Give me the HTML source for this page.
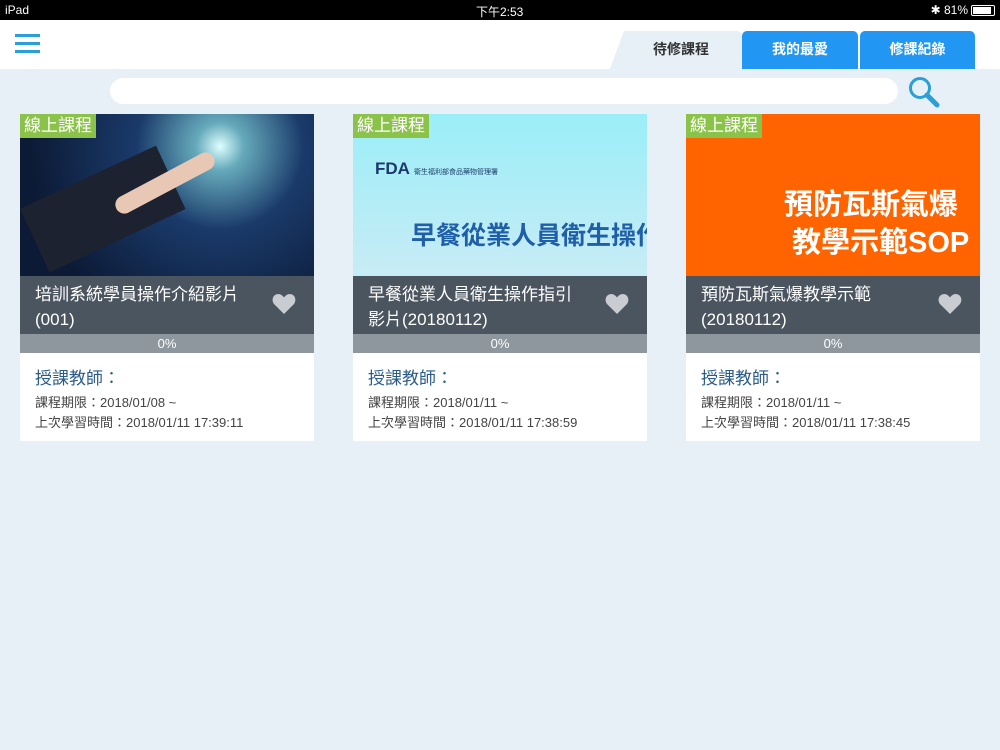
<!DOCTYPE html>
<html><head><meta charset="utf-8"><style>
*{margin:0;padding:0;box-sizing:border-box}
body{width:1000px;height:750px;background:#e6f0f6;font-family:"Liberation Sans","Noto Sans CJK TC",sans-serif;position:relative;overflow:hidden}
.status{position:absolute;top:0;left:0;width:1000px;height:20px;background:#000;color:#fff;font-size:12px}
.hdr{position:absolute;top:20px;left:0;width:1000px;height:49px;background:#fff}
.tab{position:absolute;top:31px;height:38px;color:#fff;font-weight:bold;font-size:14px;line-height:36px;text-align:center;background:#2196f3;border-radius:5px 5px 0 0}
.search{position:absolute;left:110px;top:78px;width:788px;height:26px;background:#fff;border-radius:13px}
.card{position:absolute;top:114px;width:294px;height:327px;background:#fff}
.img{position:absolute;top:0;left:0;width:294px;height:162px;overflow:hidden}
.tag{position:absolute;top:0;left:0;background:#8bc34a;color:#fff;font-size:17px;height:24px;line-height:24px;padding:0 4px}
.tband{position:absolute;top:162px;left:0;width:294px;height:58px;background:#4a5560;color:#fff;font-size:17px;line-height:25px;padding:6px 50px 0 15px}
.heart{position:absolute;right:17px;top:179px}
.prog{position:absolute;top:220px;left:0;width:294px;height:19px;background:#8e979e;color:#fff;font-size:13px;text-align:center;line-height:19px}
.t1{position:absolute;top:250px;left:15px;color:#2a5b8a;font-size:17px}
.t2{position:absolute;top:279px;left:15px;color:#444;font-size:13px;line-height:20px}
</style></head><body>
<div class="status"><span style="position:absolute;left:5px;top:3px">iPad</span><span style="position:absolute;left:476px;top:3px">下午2:53</span><span style="position:absolute;right:32px;top:3px">✱ 81%</span><div style="position:absolute;right:5px;top:5px;width:24px;height:11px;border:1px solid #fff;border-radius:2px"><div style="width:18px;height:7px;margin:1px;background:#fff"></div></div></div>
<div class="hdr">
<div style="position:absolute;left:15px;top:14px;width:25px;height:3px;background:#2a9fd8;box-shadow:0 8px 0 #2a9fd8,0 16px 0 #2a9fd8"></div>
</div>
<div style="position:absolute;left:610px;top:31px;width:132px;height:38px;background:#e6f0f6;clip-path:polygon(14px 0,100% 0,100% 100%,0 100%);border-radius:5px 5px 0 0;color:#333;font-weight:bold;font-size:14px;line-height:36px;text-align:center;padding-left:10px">待修課程</div>
<div class="tab" style="left:742px;width:116px">我的最愛</div>
<div class="tab" style="left:860px;width:115px">修課紀錄</div>
<div class="search"></div>
<svg style="position:absolute;left:907px;top:75px" width="34" height="34"><circle cx="13" cy="13" r="9.5" fill="none" stroke="#2a9fd8" stroke-width="3"/><line x1="20" y1="20" x2="30" y2="30" stroke="#2a9fd8" stroke-width="5" stroke-linecap="round"/></svg>

<div class="card" style="left:20px"><div class="img" style="background:radial-gradient(circle at 68% 20%,#dff 0,#6ab 10%,#1a3a6a 35%,#0c1a35 80%)"><div style="position:absolute;left:0;top:95px;width:150px;height:70px;background:#1c2230;transform:rotate(-25deg);transform-origin:0 0"></div><div style="position:absolute;left:90px;top:60px;width:110px;height:18px;background:#e8c8b5;transform:rotate(-28deg);border-radius:9px"></div></div><div class="tag">線上課程</div>
<div class="tband">培訓系統學員操作介紹影片<br>(001)</div><svg class="heart" width="26" height="22" viewBox="0 0 24 22"><path d="M12 21 2 11C-1 7 1 1 6.5 1 9 1 11 3 12 4.5 13 3 15 1 17.5 1 23 1 25 7 22 11Z" fill="#c9ccd0"/></svg><div class="prog">0%</div><div class="t1">授課教師：</div><div class="t2">課程期限：2018/01/08 ~<br>上次學習時間：2018/01/11 17:39:11</div></div>

<div class="card" style="left:353px"><div class="img" style="background:linear-gradient(#9aeef8,#c8ecf5)"><div style="position:absolute;left:22px;top:45px;font-weight:bold;font-size:17px;color:#1b3a6a">FDA <span style="font-size:7px;font-weight:normal">衛生福利部食品藥物管理署</span></div><div style="position:absolute;left:58px;top:102px;font-size:25px;color:#1f5ea8;white-space:nowrap;font-weight:bold">早餐從業人員衛生操作指</div></div><div class="tag">線上課程</div>
<div class="tband">早餐從業人員衛生操作指引<br>影片(20180112)</div><svg class="heart" width="26" height="22" viewBox="0 0 24 22"><path d="M12 21 2 11C-1 7 1 1 6.5 1 9 1 11 3 12 4.5 13 3 15 1 17.5 1 23 1 25 7 22 11Z" fill="#c9ccd0"/></svg><div class="prog">0%</div><div class="t1">授課教師：</div><div class="t2">課程期限：2018/01/11 ~<br>上次學習時間：2018/01/11 17:38:59</div></div>

<div class="card" style="left:686px"><div class="img" style="background:#ff6400"><div style="position:absolute;left:98px;top:72px;font-size:29px;line-height:38px;color:#fff;font-weight:bold;white-space:nowrap">預防瓦斯氣爆<br><span style="padding-left:8px">教學示範SOP</span></div></div><div class="tag">線上課程</div>
<div class="tband">預防瓦斯氣爆教學示範<br>(20180112)</div><svg class="heart" width="26" height="22" viewBox="0 0 24 22"><path d="M12 21 2 11C-1 7 1 1 6.5 1 9 1 11 3 12 4.5 13 3 15 1 17.5 1 23 1 25 7 22 11Z" fill="#c9ccd0"/></svg><div class="prog">0%</div><div class="t1">授課教師：</div><div class="t2">課程期限：2018/01/11 ~<br>上次學習時間：2018/01/11 17:38:45</div></div>
</body></html>
